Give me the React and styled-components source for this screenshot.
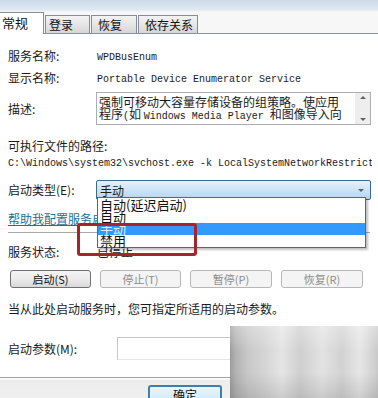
import React from "react";
import styled, { createGlobalStyle } from "styled-components";

const GlobalStyle = createGlobalStyle`
  body {
    margin: 0;
    background: #fff;
    font-family: "Noto Sans CJK SC", "Noto Sans", sans-serif;
  }
`;

const Dialog = styled.div`
  position: relative;
  width: 378px;
  height: 398px;
  overflow: hidden;
  background: #fff;
  font-size: 12px;
  color: #1a1a1a;
`;

const TitleStrip = styled.div`
  height: 12px;
  background: linear-gradient(#cbd9e6, #dfe8f0 80%, #f4f7fa);
`;

const TabBar = styled.div`
  display: flex;
  align-items: flex-end;
  height: 21px;
  background: #f7f7f7;
  border-bottom: 1px solid #8c9097;
`;

const Tab = styled.div`
  box-sizing: border-box;
  width: ${(p) => p.w}px;
  height: ${(p) => (p.active ? 22 : 18)}px;
  margin-bottom: ${(p) => (p.active ? -1 : 0)}px;
  padding-left: ${(p) => p.pad}px;
  line-height: ${(p) => (p.active ? 20 : 17)}px;
  border: 1px solid #898c95;
  border-left: ${(p) => (p.active ? "none" : "1px solid #898c95")};
  border-bottom: none;
  margin-right: 1px;
  background: ${(p) =>
    p.active ? "#fff" : "linear-gradient(#f3f3f3, #e6e6e6 50%, #d6d6d6)"};
  color: #111;
  font-size: ${(p) => (p.active ? 13 : 12)}px;
  white-space: nowrap;
`;

const Content = styled.div`
  padding: 0 8px;
`;

const Row = styled.div`
  display: grid;
  grid-template-columns: 89px 1fr;
  align-items: center;
  height: ${(p) => p.h}px;
  margin-top: ${(p) => p.mt}px;
`;

const Label = styled.div`
  white-space: nowrap;
  line-height: 14px;
`;

const Mono = styled.span`
  font-family: "Liberation Mono", monospace;
  font-size: 10px;
`;

const Value = styled.div`
  white-space: nowrap;
  line-height: 14px;
`;

const DescBox = styled.div`
  position: relative;
  box-sizing: border-box;
  height: 33px;
  margin-left: -1px;
  margin-right: -1px;
  border: 1px solid #abadb3;
  padding: 3px 18px 0 2px;
  line-height: 12px;
  white-space: nowrap;
  overflow: hidden;
`;

const ScrollBar = styled.div`
  position: absolute;
  right: 0;
  top: 0;
  bottom: 0;
  width: 15px;
  background: #eeeeee;
  display: flex;
  flex-direction: column;
  justify-content: space-between;
  align-items: center;
  padding: 3px 0;
  box-sizing: border-box;
`;

const Arrow = styled.div`
  width: 0;
  height: 0;
  border-left: 3px solid transparent;
  border-right: 3px solid transparent;
  ${(p) =>
    p.up ? "border-bottom: 3px solid #606060;" : "border-top: 3px solid #606060;"}
`;

const Line = styled.div`
  margin-top: ${(p) => p.mt}px;
  line-height: 14px;
  white-space: nowrap;
`;

const PathLine = styled(Line)`
  overflow: hidden;
  margin-right: -2px;
`;

const Select = styled.div`
  box-sizing: border-box;
  height: 20px;
  margin-left: -1px;
  margin-right: -1px;
  border: 1px solid #3d6a8f;
  border-radius: 2px;
  background: linear-gradient(#e3f0fb, #cfe5f7 45%, #b3d6f2);
  display: flex;
  align-items: center;
  justify-content: space-between;
  padding: 0 6px 0 3px;
`;

const LinkText = styled.div`
  margin-top: 12px;
  line-height: 13px;
  color: #1f6f96;
  text-decoration: underline;
  white-space: nowrap;
`;

const Separator = styled.div`
  margin-top: 7px;
  height: 1px;
  background: #a8a8a8;
`;

const Status = styled.span`
  color: #222;
`;

const ButtonRow = styled.div`
  display: flex;
  gap: 9px;
  margin-top: 13px;
  padding-left: 2px;
`;

const Button = styled.div`
  box-sizing: border-box;
  width: ${(p) => p.w}px;
  height: 18px;
  border: 1px solid ${(p) => (p.disabled ? "#b4b6b8" : "#707070")};
  border-radius: 3px;
  background: ${(p) =>
    p.disabled ? "#f4f4f4" : "linear-gradient(#f4f4f4, #ebebeb 50%, #d9d9d9)"};
  color: ${(p) => (p.disabled ? "#8c8c8c" : "#111")};
  font-size: 11px;
  line-height: 16px;
  text-align: center;
  white-space: nowrap;
`;

const Note = styled.div`
  margin-top: 14px;
  line-height: 14px;
  white-space: nowrap;
`;

const ParamInput = styled.div`
  box-sizing: border-box;
  height: 23px;
  margin-left: 20px;
  border: 1px solid #c6c8cc;
  border-bottom-color: #e6e6e6;
  background: #fff;
`;

const Footer = styled.div`
  position: absolute;
  left: 0;
  right: 0;
  top: 377px;
  bottom: 0;
  border-top: 1px solid #a0a0a0;
  background: linear-gradient(#fff 0, #fff 1px, #ececec 2px, #f0f0f0);
`;

const OkButton = styled.div`
  position: absolute;
  left: 148px;
  top: 7px;
  box-sizing: border-box;
  width: 74px;
  height: 22px;
  border: 2px solid #3c7fb1;
  border-radius: 3px;
  background: linear-gradient(#eaf6fd, #c9e7f7);
  text-align: center;
  line-height: 15px;
  color: #111;
`;

const Dropdown = styled.div`
  position: absolute;
  left: 97px;
  top: 197px;
  width: 269px;
  box-sizing: border-box;
  border: 1px solid #646464;
  background: #fff;
  box-shadow: 2px 2px 2px rgba(0, 0, 0, 0.25);
  padding-top: 1px;
`;

const Option = styled.div`
  height: 12px;
  line-height: 12px;
  padding-left: 2px;
  font-size: 13px;
  background: ${(p) => (p.selected ? "#3399ff" : "transparent")};
  color: ${(p) => (p.selected ? "#dfefff" : "#111")};
  white-space: nowrap;
`;

const Highlight = styled.div`
  position: absolute;
  left: 77px;
  top: 223px;
  width: 120px;
  height: 33px;
  box-sizing: border-box;
  border: 3px solid #a3262e;
  border-radius: 3px;
`;

const Blur = styled.div`
  position: absolute;
  left: 230px;
  top: 326px;
  width: 148px;
  height: 72px;
  background:
    linear-gradient(rgba(255, 255, 255, 0.3), rgba(255, 255, 255, 0) 35%, rgba(0, 0, 0, 0) 65%, rgba(0, 0, 0, 0.1)),
    linear-gradient(90deg, #9c9c9c 0, #b4b4b4 6px, #c8c8c8 18px, #d4d4d4 34px, #e4e4e4 52px, #cfcfcf 70px, #e2e2e2 92px, #d2d2d2 112px, #e6e6e6 130px, #cacaca 148px);
`;

export default function App() {
  return (
    <>
      <GlobalStyle />
      <Dialog>
        <TitleStrip />
        <TabBar>
          <Tab active w={44} pad={2}>常规</Tab>
          <Tab w={45} pad={3}>登录</Tab>
          <Tab w={46} pad={6}>恢复</Tab>
          <Tab w={60} pad={6}>依存关系</Tab>
        </TabBar>
        <Content>
          <Row h={22} mt={11}>
            <Label>服务名称:</Label>
            <Value>
              <Mono>WPDBusEnum</Mono>
            </Value>
          </Row>
          <Row h={22} mt={0}>
            <Label>显示名称:</Label>
            <Value>
              <Mono>Portable Device Enumerator Service</Mono>
            </Value>
          </Row>
          <Row h={33} mt={3}>
            <Label>描述:</Label>
            <DescBox>
              强制可移动大容量存储设备的组策略。使应用
              <br />
              程序<Mono>(</Mono>如 <Mono>Windows Media Player </Mono>和图像导入向
              <ScrollBar>
                <Arrow up />
                <Arrow />
              </ScrollBar>
            </DescBox>
          </Row>
          <Line mt={14}>可执行文件的路径:</Line>
          <PathLine mt={1}>
            <Mono>C:\Windows\system32\svchost.exe -k LocalSystemNetworkRestricted</Mono>
          </PathLine>
          <Row h={20} mt={9}>
            <Label>启动类型(E):</Label>
            <Select>
              <span>手动</span>
              <Arrow />
            </Select>
          </Row>
          <LinkText>帮助我配置服务启动选项。</LinkText>
          <Separator />
          <Row h={14} mt={10}>
            <Label>服务状态:</Label>
            <Status>已停止</Status>
          </Row>
          <ButtonRow>
            <Button w={81}>启动(S)</Button>
            <Button w={81} disabled>停止(T)</Button>
            <Button w={82} disabled>暂停(P)</Button>
            <Button w={82} disabled>恢复(R)</Button>
          </ButtonRow>
          <Note>当从此处启动服务时，您可指定所适用的启动参数。</Note>
          <Row h={23} mt={21}>
            <Label>启动参数(M):</Label>
            <ParamInput />
          </Row>
        </Content>
        <Footer>
          <OkButton>确定</OkButton>
        </Footer>
        <Dropdown>
          <Option>自动(延迟启动)</Option>
          <Option>自动</Option>
          <Option selected>手动</Option>
          <Option>禁用</Option>
        </Dropdown>
        <Highlight />
        <Blur />
      </Dialog>
    </>
  );
}
